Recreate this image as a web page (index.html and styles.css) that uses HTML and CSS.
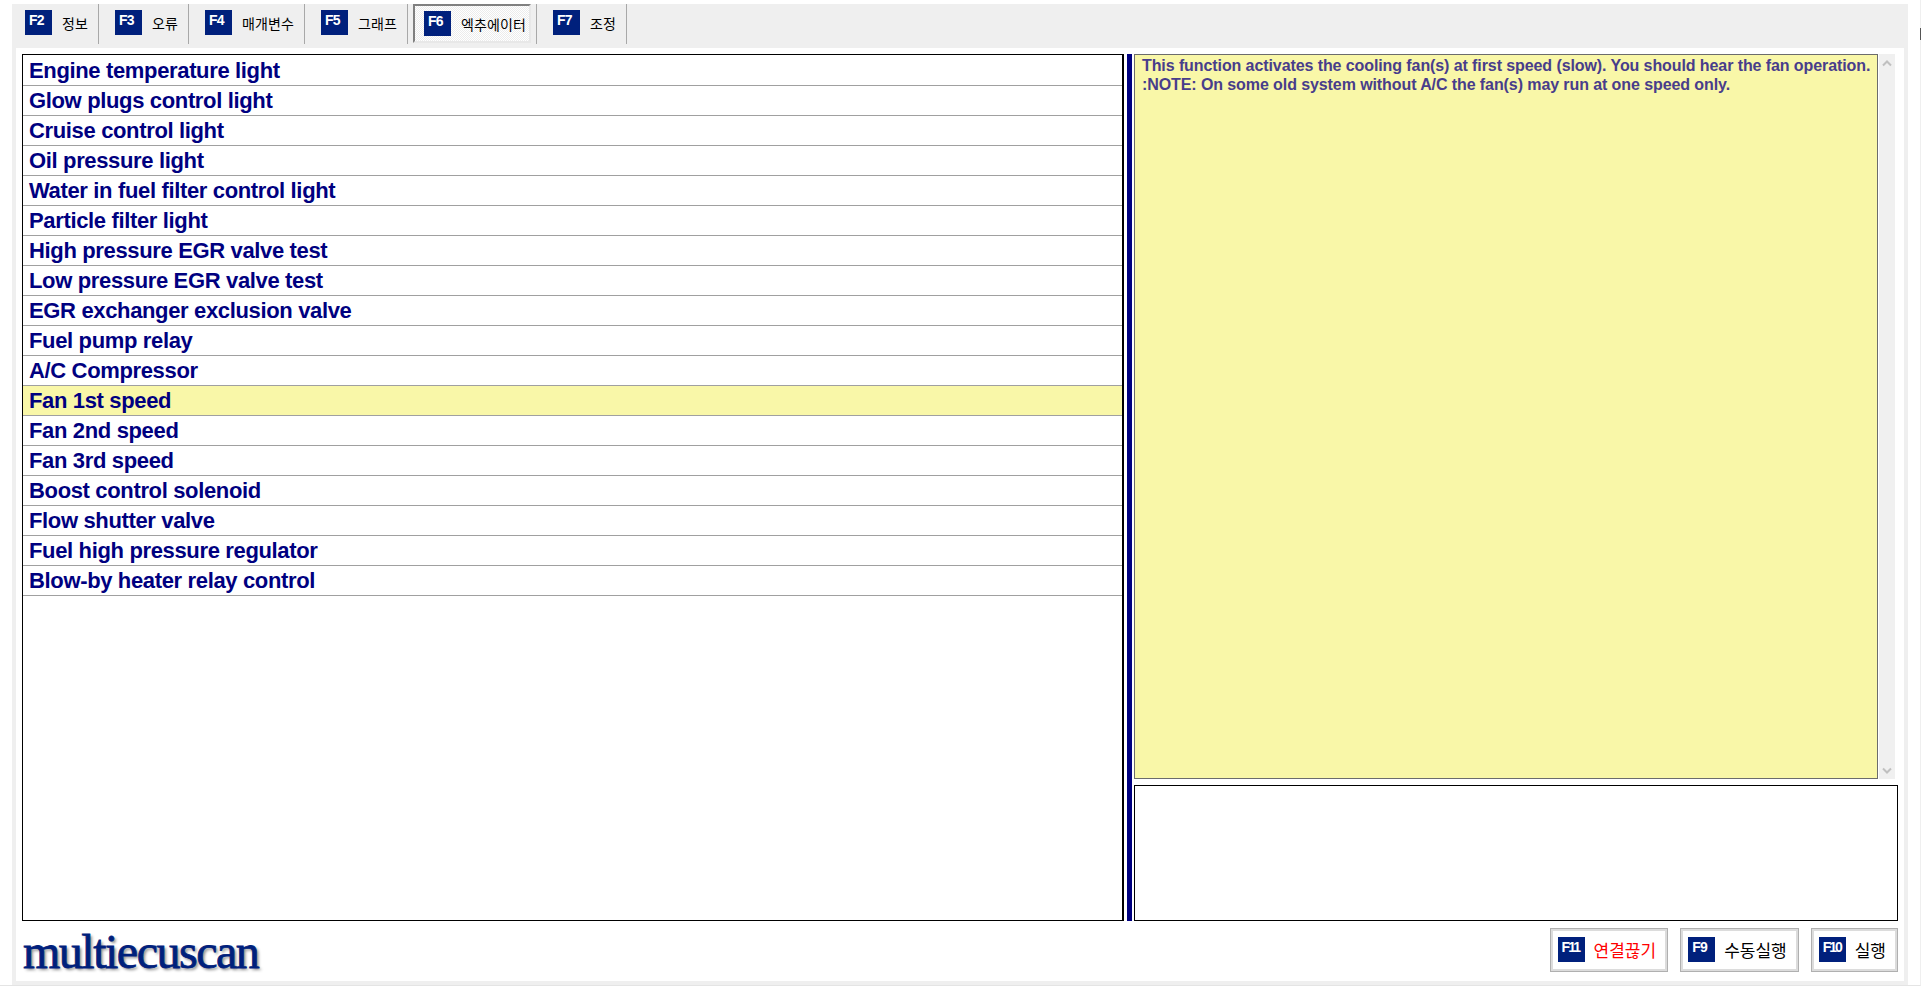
FILE: index.html
```html
<!DOCTYPE html>
<html lang="ko">
<head>
<meta charset="utf-8">
<title>multiecuscan</title>
<link rel="stylesheet" href="styles.css">
</head>
<body>
<div class="page">
  <div class="frame">
    <nav class="toolbar">
      <div class="tab tab--first"><div class="tab__face"><span class="key">F2</span><span class="tab__label">정보</span></div></div>
      <div class="tab"><div class="tab__face"><span class="key">F3</span><span class="tab__label">오류</span></div></div>
      <div class="tab"><div class="tab__face"><span class="key">F4</span><span class="tab__label">매개변수</span></div></div>
      <div class="tab"><div class="tab__face"><span class="key">F5</span><span class="tab__label">그래프</span></div></div>
      <div class="tab"><div class="tab__face tab__face--active"><span class="key">F6</span><span class="tab__label">엑추에이터</span></div></div>
      <div class="tab"><div class="tab__face"><span class="key">F7</span><span class="tab__label">조정</span></div></div>
    </nav>
    <main class="panel">
      <div class="columns">
        <ul class="list">
          <li class="list__row">Engine temperature light</li>
          <li class="list__row">Glow plugs control light</li>
          <li class="list__row">Cruise control light</li>
          <li class="list__row">Oil pressure light</li>
          <li class="list__row">Water in fuel filter control light</li>
          <li class="list__row">Particle filter light</li>
          <li class="list__row">High pressure EGR valve test</li>
          <li class="list__row">Low pressure EGR valve test</li>
          <li class="list__row">EGR exchanger exclusion valve</li>
          <li class="list__row">Fuel pump relay</li>
          <li class="list__row">A/C Compressor</li>
          <li class="list__row list__row--selected">Fan 1st speed</li>
          <li class="list__row">Fan 2nd speed</li>
          <li class="list__row">Fan 3rd speed</li>
          <li class="list__row">Boost control solenoid</li>
          <li class="list__row">Flow shutter valve</li>
          <li class="list__row">Fuel high pressure regulator</li>
          <li class="list__row">Blow-by heater relay control</li>
        </ul>
        <div class="splitter"></div>
        <div class="side">
          <div class="info">
            <div class="info__text">This function activates the cooling fan(s) at first speed (slow). You should hear the fan operation.<br>:NOTE: On some old system without A/C the fan(s) may run at one speed only.</div>
            <div class="scrollbar">
              <svg class="scrollbar__arrow" width="10" height="8" viewBox="0 0 10 8"><path d="M1 6.5 5 2.5 9 6.5" fill="none" stroke="#c0c0c0" stroke-width="2"/></svg>
              <svg class="scrollbar__arrow" width="10" height="8" viewBox="0 0 10 8"><path d="M1 1.5 5 5.5 9 1.5" fill="none" stroke="#c0c0c0" stroke-width="2"/></svg>
            </div>
          </div>
          <div class="output"></div>
        </div>
      </div>
      <footer class="footer">
        <div class="logo">multiecuscan</div>
        <div class="actions">
          <div class="action"><span class="key key--wide">F11</span><span class="action__label action__label--danger">연결끊기</span></div>
          <div class="action"><span class="key">F9</span><span class="action__label">수동실행</span></div>
          <div class="action"><span class="key key--wide">F10</span><span class="action__label">실행</span></div>
        </div>
      </footer>
    </main>
  </div>
  <div class="edge-mark"></div>
</div>
</body>
</html>
```
FILE: styles.css
```css
* { box-sizing: border-box; }
html, body { margin: 0; padding: 0; background: #fff; overflow: hidden; }
.page {
  position: relative;
  height: 986px;
  padding: 4px 12px 0 12px;
  border-bottom: 1px solid #e4e4e4;
  border-right: 1px solid #efefef;
  font-family: "Liberation Sans", Arial, sans-serif;
}
.edge-mark { position: absolute; right: -1px; top: 28px; width: 1px; height: 12px; background: #555; }
.frame { height: 975px; display: flex; flex-direction: column; }

.toolbar { height: 44px; flex: none; display: flex; background: #efefef; }
.tab { height: 40px; padding: 0 5px; border-right: 1px solid #a8a8a8; }
.tab--first { padding-left: 2px; }
.tab__face {
  height: 39px;
  padding: 4px 3px 0 9px;
  display: flex;
  border: 2px solid transparent;
}
.tab__face--active {
  padding-top: 5px;
  border-color: #808080 #e8e8e8 #e8e8e8 #808080;
  background: repeating-conic-gradient(#ececec 0 25%, #fff 0 50%) 0 0 / 2px 2px;
}
.key {
  flex: none;
  width: 27px;
  height: 25px;
  padding: 3px 0 0 4px;
  background: #00207c;
  color: #fff;
  font-size: 14px;
  line-height: 15px;
  font-weight: 700;
  letter-spacing: -0.8px;
}
.key--wide { letter-spacing: -2px; }
.tab__label {
  margin-left: 10px;
  font-family: "Noto Sans CJK KR", sans-serif;
  font-size: 14px;
  letter-spacing: 0.12px;
  line-height: 27px;
  color: #000;
}

.panel {
  flex: 1;
  display: flex;
  flex-direction: column;
  padding-top: 6px;
  border: 4px solid #efefef;
  border-width: 0 4px 4px;
  background: #fff;
}
.columns { height: 867px; flex: none; display: flex; padding: 0 6px; }
.list {
  width: 1102px;
  flex: none;
  margin: 0;
  padding: 1px 0 0;
  list-style: none;
  border: 1px solid #000;
  border-right-width: 2px;
}
.list__row {
  height: 30px;
  padding-left: 6px;
  border-bottom: 1px solid #a0a0a0;
  color: #000080;
  font-size: 22px;
  font-weight: 700;
  letter-spacing: -0.35px;
  line-height: 30px;
  white-space: nowrap;
}
.list__row--selected { background: #f9f7a8; }
.splitter { width: 5px; flex: none; margin: 0 2px 0 3px; background: #000080; }
.side { flex: 1; min-width: 0; display: flex; flex-direction: column; gap: 6px; }
.info { height: 725px; flex: none; display: flex; gap: 1px; }
.info__text {
  width: 744px;
  flex: none;
  padding: 1px 7px 0;
  background: #f9f7a8;
  border: 1px solid #6c6c6c;
  color: #483d8b;
  font-size: 16px;
  font-weight: 700;
  letter-spacing: -0.09px;
  line-height: 19px;
  white-space: nowrap;
}
.scrollbar {
  width: 16px;
  flex: none;
  display: flex;
  flex-direction: column;
  justify-content: space-between;
  align-items: center;
  padding: 5px 0 4px;
  background: #f0f0f0;
}
.scrollbar__arrow { display: block; }
.output { flex: 1; border: 1px solid #000; }

.footer {
  flex: 1;
  display: flex;
  justify-content: space-between;
  padding: 7px 6px 0 7px;
}
.logo {
  margin-top: -5px;
  font-family: "Liberation Serif", serif;
  font-size: 48px;
  line-height: 58px;
  letter-spacing: -1.5px;
  color: #00207c;
  -webkit-text-stroke: 0.8px #00207c;
  text-shadow: 2px 2px 3px #8a8a8a;
}
.actions { display: flex; gap: 12px; }
.action {
  height: 44px;
  display: flex;
  padding: 8px 11px 0 7px;
  border: 1px solid #b0b0b0;
  box-shadow: inset 0 0 0 2px #dcdcdc;
  background: #fff;
}
.action__label {
  margin-left: 9px;
  font-family: "Noto Sans CJK KR", sans-serif;
  font-size: 17px;
  line-height: 26px;
  color: #000;
}
.action__label--danger { color: #f00; }
```
